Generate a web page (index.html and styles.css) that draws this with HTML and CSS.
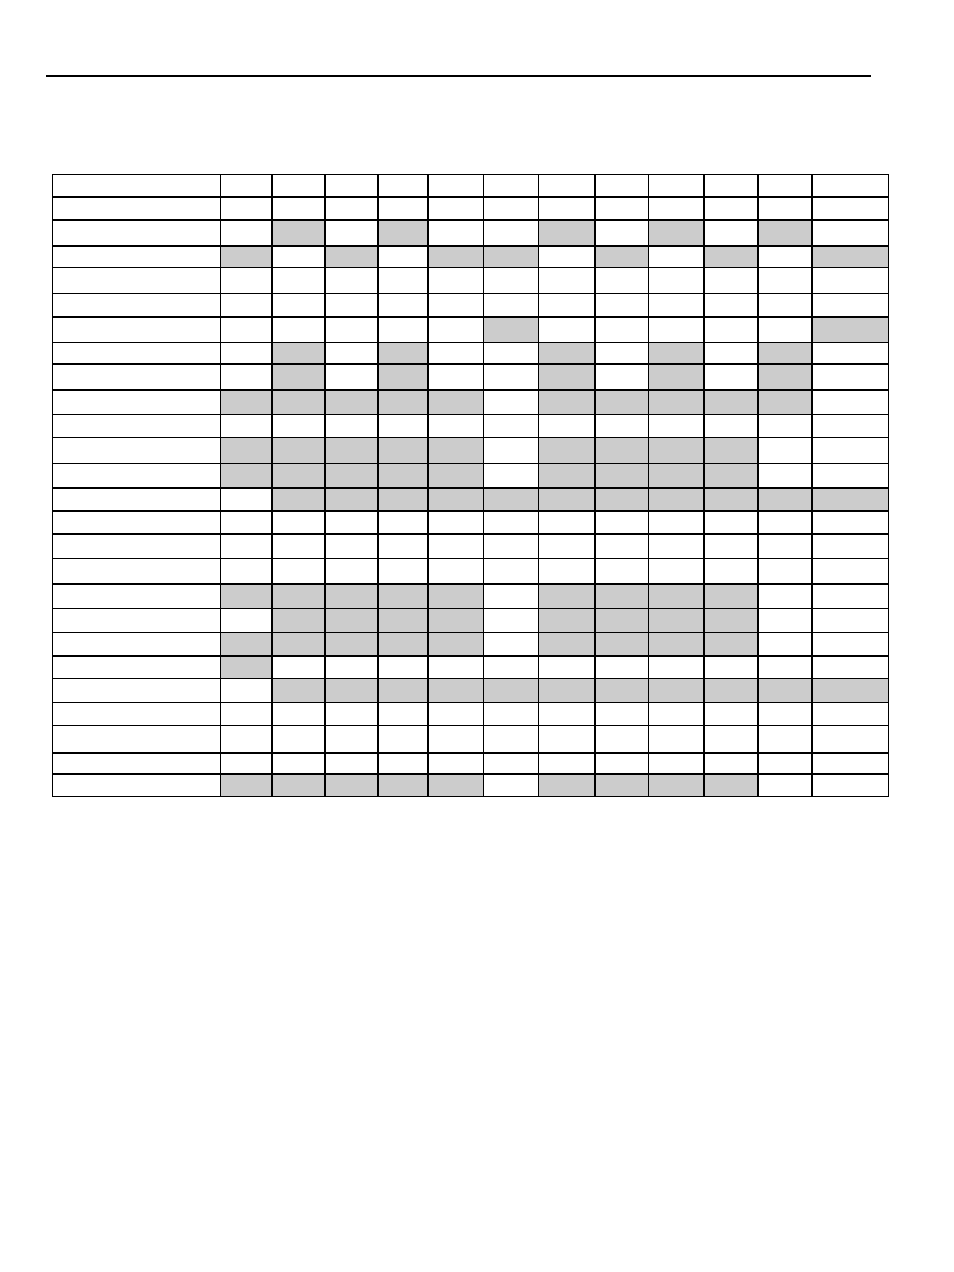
FILE: index.html
```html
<!DOCTYPE html>
<html>
<head>
<meta charset="utf-8">
<link rel="stylesheet" href="styles.css">
</head>
<body>
<div class="page">
  <div class="rule"></div>
  <table class="grid">
    <colgroup>
      <col class="c0"><col class="c1"><col class="c2"><col class="c3"><col class="c4"><col class="c5"><col class="c6"><col class="c7"><col class="c8"><col class="c9"><col class="c10"><col class="c11"><col class="c12">
    </colgroup>
    <tbody>
      <tr class="h22"><td></td><td></td><td></td><td></td><td></td><td></td><td></td><td></td><td></td><td></td><td></td><td></td><td></td></tr>
      <tr class="h23 tk"><td></td><td></td><td></td><td></td><td></td><td></td><td></td><td></td><td></td><td></td><td></td><td></td><td></td></tr>
      <tr class="h26 tk"><td></td><td></td><td class="g"></td><td></td><td class="g"></td><td></td><td></td><td class="g"></td><td></td><td class="g"></td><td></td><td class="g"></td><td></td></tr>
      <tr class="h22 tk"><td></td><td class="g"></td><td></td><td class="g"></td><td></td><td class="g"></td><td class="g"></td><td></td><td class="g"></td><td></td><td class="g"></td><td></td><td class="g"></td></tr>
      <tr class="h26"><td></td><td></td><td></td><td></td><td></td><td></td><td></td><td></td><td></td><td></td><td></td><td></td><td></td></tr>
      <tr class="h23"><td></td><td></td><td></td><td></td><td></td><td></td><td></td><td></td><td></td><td></td><td></td><td></td><td></td></tr>
      <tr class="h26 tk"><td></td><td></td><td></td><td></td><td></td><td></td><td class="g"></td><td></td><td></td><td></td><td></td><td></td><td class="g"></td></tr>
      <tr class="h21"><td></td><td></td><td class="g"></td><td></td><td class="g"></td><td></td><td></td><td class="g"></td><td></td><td class="g"></td><td></td><td class="g"></td><td></td></tr>
      <tr class="h26 tk"><td></td><td></td><td class="g"></td><td></td><td class="g"></td><td></td><td></td><td class="g"></td><td></td><td class="g"></td><td></td><td class="g"></td><td></td></tr>
      <tr class="h25 tk"><td></td><td class="g"></td><td class="g"></td><td class="g"></td><td class="g"></td><td class="g"></td><td></td><td class="g"></td><td class="g"></td><td class="g"></td><td class="g"></td><td class="g"></td><td></td></tr>
      <tr class="h23"><td></td><td></td><td></td><td></td><td></td><td></td><td></td><td></td><td></td><td></td><td></td><td></td><td></td></tr>
      <tr class="h26"><td></td><td class="g"></td><td class="g"></td><td class="g"></td><td class="g"></td><td class="g"></td><td></td><td class="g"></td><td class="g"></td><td class="g"></td><td class="g"></td><td></td><td></td></tr>
      <tr class="h24"><td></td><td class="g"></td><td class="g"></td><td class="g"></td><td class="g"></td><td class="g"></td><td></td><td class="g"></td><td class="g"></td><td class="g"></td><td class="g"></td><td></td><td></td></tr>
      <tr class="h23 tk"><td></td><td></td><td class="g"></td><td class="g"></td><td class="g"></td><td class="g"></td><td class="g"></td><td class="g"></td><td class="g"></td><td class="g"></td><td class="g"></td><td class="g"></td><td class="g"></td></tr>
      <tr class="h23 tk"><td></td><td></td><td></td><td></td><td></td><td></td><td></td><td></td><td></td><td></td><td></td><td></td><td></td></tr>
      <tr class="h25 tk"><td></td><td></td><td></td><td></td><td></td><td></td><td></td><td></td><td></td><td></td><td></td><td></td><td></td></tr>
      <tr class="h25"><td></td><td></td><td></td><td></td><td></td><td></td><td></td><td></td><td></td><td></td><td></td><td></td><td></td></tr>
      <tr class="h25 tk"><td></td><td class="g"></td><td class="g"></td><td class="g"></td><td class="g"></td><td class="g"></td><td></td><td class="g"></td><td class="g"></td><td class="g"></td><td class="g"></td><td></td><td></td></tr>
      <tr class="h24"><td></td><td></td><td class="g"></td><td class="g"></td><td class="g"></td><td class="g"></td><td></td><td class="g"></td><td class="g"></td><td class="g"></td><td class="g"></td><td></td><td></td></tr>
      <tr class="h23"><td></td><td class="g"></td><td class="g"></td><td class="g"></td><td class="g"></td><td class="g"></td><td></td><td class="g"></td><td class="g"></td><td class="g"></td><td class="g"></td><td></td><td></td></tr>
      <tr class="h23 tk"><td></td><td class="g"></td><td></td><td></td><td></td><td></td><td></td><td></td><td></td><td></td><td></td><td></td><td></td></tr>
      <tr class="h24"><td></td><td></td><td class="g"></td><td class="g"></td><td class="g"></td><td class="g"></td><td class="g"></td><td class="g"></td><td class="g"></td><td class="g"></td><td class="g"></td><td class="g"></td><td class="g"></td></tr>
      <tr class="h23"><td></td><td></td><td></td><td></td><td></td><td></td><td></td><td></td><td></td><td></td><td></td><td></td><td></td></tr>
      <tr class="h27"><td></td><td></td><td></td><td></td><td></td><td></td><td></td><td></td><td></td><td></td><td></td><td></td><td></td></tr>
      <tr class="h21 tk"><td></td><td></td><td></td><td></td><td></td><td></td><td></td><td></td><td></td><td></td><td></td><td></td><td></td></tr>
      <tr class="h23 tk"><td></td><td class="g"></td><td class="g"></td><td class="g"></td><td class="g"></td><td class="g"></td><td></td><td class="g"></td><td class="g"></td><td class="g"></td><td class="g"></td><td></td><td></td></tr>
    </tbody>
  </table>
</div>
</body>
</html>
```

FILE: styles.css
```css
html, body {
  margin: 0;
  padding: 0;
  background: #ffffff;
  font-family: "Liberation Sans", Arial, sans-serif;
}

.page {
  padding-top: 75px;
}

.rule {
  margin-left: 46px;
  width: 825px;
  height: 2px;
  background: #000000;
}

.grid {
  margin-top: 97px;
  margin-left: 52px;
  border-collapse: collapse;
  table-layout: fixed;
  width: 837px;
}

.grid td {
  border: 1px solid #000000;
  padding: 0;
  background: #ffffff;
}

.grid td.g {
  background: #cccccc;
}

.grid tr.tk > td {
  border-top-width: 2px;
}

.grid td:nth-child(3),
.grid td:nth-child(4),
.grid td:nth-child(5),
.grid td:nth-child(6),
.grid td:nth-child(9),
.grid td:nth-child(11),
.grid td:nth-child(12),
.grid td:nth-child(13) {
  border-left-width: 2px;
}

.c0 { width: 168px; }
.c1 { width: 51px; }
.c2 { width: 53px; }
.c3 { width: 53px; }
.c4 { width: 50px; }
.c5 { width: 56px; }
.c6 { width: 55px; }
.c7 { width: 56px; }
.c8 { width: 54px; }
.c9 { width: 55px; }
.c10 { width: 54px; }
.c11 { width: 54px; }
.c12 { width: 77px; }

.h21 { height: 21px; }
.h22 { height: 22px; }
.h23 { height: 23px; }
.h24 { height: 24px; }
.h25 { height: 25px; }
.h26 { height: 26px; }
.h27 { height: 27px; }
```
